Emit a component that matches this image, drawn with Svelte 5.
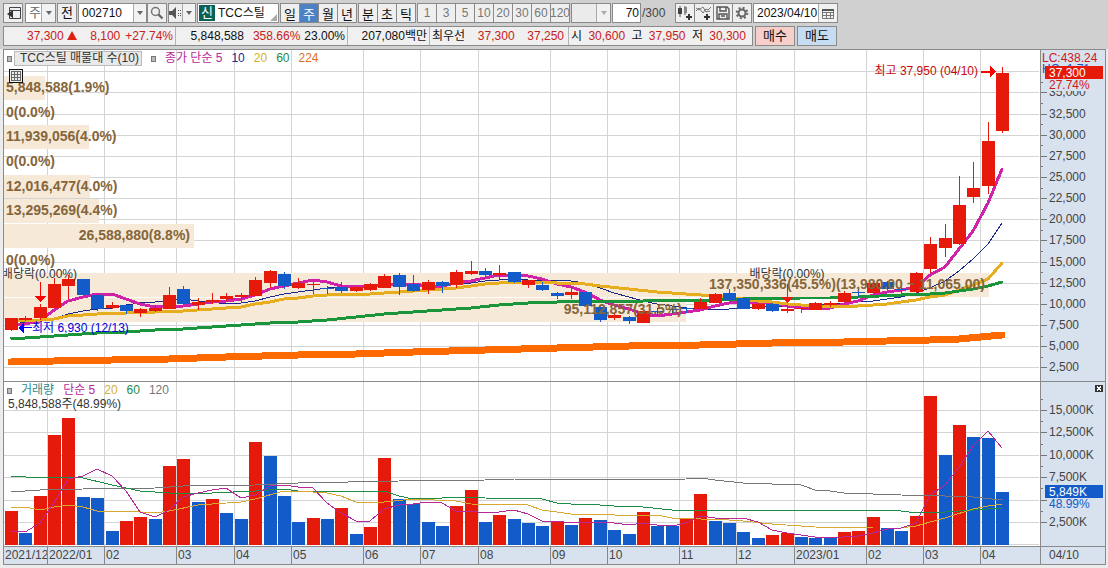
<script lang="ts">
  let period = $state('주');
  let unit = $state('주');
  let code = $state('002710');
  let stock = $state('TCC스틸');
  let count = $state('70');
  let date = $state('2023/04/10');
  let width = $state(1036);

  const periods = ['일', '주', '월', '년'];
  const smallPeriods = ['분', '초', '틱'];
  const minutes = ['1', '3', '5', '10', '20', '30', '60', '120'];

  const RED = '#e61a0a';
  const BLUE = '#125bc8';

  // color, body top, body bottom, high, low
  const candles: [string, number, number, number, number][] = [
    ['r', 268, 280, 268, 281], ['r', 268, 270, 266, 271], ['r', 257, 268, 254, 270], ['r', 234, 258, 228, 258],
    ['r', 229, 236, 225, 249], ['b', 229, 245, 229, 245], ['b', 245, 259, 243, 261], ['r', 255, 258, 252, 259],
    ['b', 255, 261, 255, 264], ['r', 259, 263, 258, 267], ['r', 258, 261, 255, 262], ['r', 245, 259, 237, 259],
    ['b', 239, 254, 236, 254], ['r', 252, 255, 248, 260], ['r', 250, 252, 243, 254], ['r', 246, 249, 243, 251],
    ['r', 245, 247, 243, 253], ['r', 230, 246, 227, 246], ['r', 221, 233, 220, 238], ['b', 224, 236, 222, 239],
    ['r', 233, 238, 228, 239], ['r', 234, 235, 231, 244], ['b', 238, 239, 236, 244], ['b', 237, 241, 232, 243],
    ['r', 237, 241, 237, 242], ['r', 234, 240, 233, 241], ['r', 226, 238, 224, 238], ['b', 225, 237, 223, 245],
    ['b', 234, 241, 225, 242], ['r', 232, 240, 230, 244], ['b', 232, 236, 231, 243], ['r', 222, 235, 220, 238],
    ['r', 221, 224, 211, 225], ['b', 221, 225, 218, 226], ['r', 223, 225, 215, 229], ['b', 222, 232, 222, 233],
    ['r', 230, 235, 230, 238], ['b', 235, 240, 232, 241], ['b', 243, 246, 242, 249], ['r', 242, 245, 237, 249],
    ['b', 242, 256, 242, 257], ['b', 257, 270, 256, 272], ['r', 265, 268, 263, 270], ['b', 267, 271, 266, 274],
    ['r', 261, 273, 261, 273], ['b', 261, 262, 258, 265], ['b', 259, 260, 256, 263], ['b', 258, 259, 257, 263],
    ['r', 252, 259, 248, 259], ['r', 244, 253, 243, 253], ['b', 243, 250, 239, 250], ['b', 248, 259, 248, 259],
    ['r', 254, 259, 253, 260], ['b', 254, 261, 253, 262], ['r', 259, 261, 255, 263], ['r', 258, 259, 257, 263],
    ['r', 253, 260, 252, 260], ['r', 253, 255, 251, 257], ['r', 243, 252, 241, 252], ['b', 242, 243, 239, 247],
    ['r', 233, 243, 232, 244], ['b', 232, 239, 231, 240], ['b', 239, 240, 236, 243], ['r', 223, 242, 222, 243],
    ['r', 194, 219, 187, 223], ['r', 188, 198, 174, 207], ['r', 155, 194, 126, 195], ['r', 138, 147, 112, 153],
    ['r', 91, 136, 72, 144], ['r', 23, 81, 17, 83]
  ];

  const volumes = [
    34, 12, 49, 110, 127, 48, 47, 14, 24, 28, 26, 79, 86, 43, 46, 32, 26, 103, 89, 49, 23, 27, 26, 37, 11,
    18, 87, 46, 41, 23, 19, 39, 55, 23, 30, 26, 22, 19, 24, 20, 27, 25, 15, 11, 33, 19, 19, 27, 51, 24,
    22, 13, 7, 10, 12, 8, 7, 7, 13, 14, 28, 17, 14, 29, 149, 90, 120, 108, 107, 53
  ];
  const volumeUp = [0, 2, 3, 4, 8, 9, 11, 12, 14, 17, 21, 23, 25, 26, 31, 32, 34, 38, 40, 44, 47, 48, 53, 54, 58, 59, 60, 63, 64, 66];

  // moving averages: candle index, y
  type Points = [number, number][];
  const seq = (ys: number[]): Points => ys.map((y, i) => [i, y]);

  const ma5 = seq([
    276, 274, 271, 260, 251, 247, 244, 244, 249, 254, 257, 256, 256, 254, 252, 251, 249, 245, 239, 236, 233, 230, 232, 236,
    237, 236, 235, 234, 234, 236, 236, 233, 231, 228, 225, 225, 226, 229, 234, 237, 242, 250, 255, 259, 264, 266, 264, 262,
    260, 256, 253, 252, 252, 253, 256, 258, 258, 258, 254, 251, 245, 242, 240, 237, 225, 217, 199, 181, 153, 119
  ]);
  const ma10 = seq([
    275, 272, 271, 269, 264, 261, 259, 258, 255, 253, 252, 251, 249, 251, 252, 254, 253, 251, 247, 244, 242, 240, 238, 237,
    237, 235, 234, 235, 236, 236, 235, 234, 233, 231, 230, 229, 230, 230, 230, 231, 233, 238, 243, 247, 251, 254, 256, 258,
    259, 259, 259, 258, 257, 256, 256, 257, 256, 254, 253, 252, 251, 249, 247, 243, 238, 231, 221, 209, 194, 173
  ]);
  const ma20: Points = [
    [0, 271], [2, 270], [3, 269], [4, 266], [5, 265], [6, 264], [8, 263], [10, 262], [12, 261], [14, 259], [15, 258], [16, 257],
    [17, 254], [18, 252], [19, 249], [20, 248], [21, 246], [22, 245], [23, 244], [24, 245], [25, 244], [27, 242], [29, 240],
    [31, 238], [32, 236], [33, 234], [34, 233], [36, 232], [38, 233], [40, 234], [41, 236], [43, 239], [45, 242], [47, 244],
    [49, 246], [50, 247], [51, 249], [52, 251], [53, 252], [54, 254], [55, 255], [56, 256], [59, 256], [60, 255], [61, 254],
    [62, 252], [63, 250], [64, 247], [65, 245], [66, 240], [67, 235], [68, 229], [69, 213]
  ];
  const ma60: Points = [
    [0, 288], [1, 288], [2, 287], [4, 285], [6, 283], [8, 282], [10, 280], [12, 279], [14, 277], [16, 275], [18, 273], [20, 272],
    [22, 270], [24, 267], [26, 264], [28, 262], [30, 260], [32, 258], [34, 255], [36, 253], [38, 252], [40, 251], [44, 251],
    [49, 250], [51, 249], [55, 248], [57, 248], [59, 247], [62, 245], [64, 244], [65, 243], [66, 241], [67, 239], [68, 236], [69, 232]
  ];
  const ma224: Points = [
    [0, 312], [3, 311], [7, 310], [11, 309], [15, 307], [20, 305], [24, 304], [28, 302], [33, 300], [38, 298], [43, 296],
    [48, 295], [53, 293], [58, 292], [61, 291], [64, 290], [66, 289], [69, 285]
  ];

  const vol5: Points = [
    [0, 149], [1, 150], [2, 141], [3, 121], [4, 97], [5, 94], [6, 87], [7, 94], [8, 109], [9, 130], [10, 135], [11, 128], [12, 115],
    [13, 111], [14, 108], [15, 106], [16, 116], [17, 113], [18, 104], [19, 103], [20, 105], [21, 106], [22, 121], [23, 131],
    [24, 139], [25, 139], [26, 127], [27, 123], [28, 122], [29, 120], [30, 121], [31, 129], [32, 129], [33, 131], [34, 130],
    [35, 128], [36, 132], [37, 139], [38, 139], [39, 141], [41, 140], [42, 141], [43, 143], [44, 141], [45, 143], [46, 144],
    [47, 141], [48, 134], [49, 136], [51, 136], [52, 140], [53, 148], [54, 151], [55, 153], [56, 155], [58, 155], [59, 154],
    [60, 151], [61, 147], [62, 146], [63, 141], [64, 113], [65, 103], [66, 85], [67, 64], [68, 49], [69, 66]
  ];
  const vol20: Points = [
    [0, 125], [1, 125], [2, 128], [3, 125], [4, 123], [5, 125], [6, 129], [7, 130], [8, 129], [10, 131], [11, 129], [13, 123],
    [16, 120], [17, 117], [19, 109], [21, 110], [22, 111], [23, 114], [24, 120], [25, 121], [26, 120], [28, 117], [31, 119],
    [32, 122], [36, 123], [37, 128], [39, 132], [41, 132], [43, 134], [45, 133], [46, 136], [50, 138], [51, 139], [53, 142],
    [56, 145], [60, 146], [62, 146], [63, 144], [64, 140], [65, 136], [67, 127], [68, 124], [69, 122]
  ];
  const vol60: Points = [
    [0, 94], [2, 96], [4, 95], [5, 96], [7, 103], [9, 109], [11, 111], [14, 111], [17, 109], [19, 107], [20, 109], [25, 110],
    [26, 109], [27, 114], [28, 117], [32, 115], [33, 116], [37, 117], [38, 121], [39, 122], [41, 123], [42, 124], [44, 125],
    [46, 128], [50, 128], [62, 129], [63, 131], [65, 130], [66, 129], [69, 126]
  ];
  const vol120: Points = [
    [0, 110], [2, 108], [5, 107], [10, 106], [12, 104], [17, 103], [20, 101], [27, 99], [33, 98], [35, 97], [41, 98], [47, 97],
    [48, 96], [49, 98], [51, 101], [53, 102], [55, 103], [56, 108], [57, 109], [58, 111], [60, 112], [62, 113], [65, 114],
    [67, 115], [69, 118]
  ];

  // volume profile bands, size is the share of the plot width
  const bands = [
    { y: 26, h: 24, size: 0.04, text: '5,848,588(1.9%)' },
    { y: 51, h: 24, size: 0, text: '0(0.0%)' },
    { y: 75, h: 24, size: 0.082, text: '11,939,056(4.0%)' },
    { y: 100, h: 24, size: 0, text: '0(0.0%)' },
    { y: 125, h: 23, size: 0.083, text: '12,016,477(4.0%)' },
    { y: 149, h: 24, size: 0.092, text: '13,295,269(4.4%)' },
    { y: 174, h: 24, size: 0.183, text: '26,588,880(8.8%)' },
    { y: 199, h: 24, size: 0, text: '0(0.0%)' },
    { y: 223, h: 24, size: 0.951, text: '137,350,336(45.5%)(13,980.00 ~ 11,065.00)' },
    { y: 248, h: 24, size: 0.658, text: '95,112,857(31.5%)' }
  ];

  const months: [number, string][] = [
    [2.5, '2022/01'], [6.5, '02'], [11.5, '03'], [15.5, '04'], [19.5, '05'], [24.5, '06'], [28.5, '07'], [32.5, '08'],
    [37.5, '09'], [41.5, '10'], [46.5, '11'], [50.5, '12'], [54.5, '2023/01'], [59.5, '02'], [63.5, '03'], [67.5, '04']
  ];

  const prices = Array.from({ length: 15 }, (_, i) => (i + 1) * 2500);
  const volumeTicks = [2500, 5000, 7500, 10000, 12500, 15000];

  const priceY = (p: number) => Math.round(338.5 - p * 0.00846);
  const volumeY = (v: number) => Math.round(162.4 - v * 0.00896);

  const step = $derived((width - 45) / 69);
  const x = $derived((i: number) => Math.round(7 + i * step));
  const path = $derived((pts: Points) => pts.map(([i, y]) => `${x(i)},${y}`).join(' '));
</script>

<div class="app">
  <header>
    <div class="bar tight">
      <button class="btn icon panel" aria-label="패널 열기">
        <svg width="15" height="14" viewBox="0 0 15 14"><path d="M3.5 1.5h11v11h-11zM3.5 4.5h11M6.5 4.5v8" fill="none" stroke="#444" /><path d="M7 4v8L1 8z" fill="#333" /></svg>
      </button>
      <div class="combo unit">
        <select aria-label="주기" bind:value={unit}>
          <option>주</option>
          <option>월</option>
        </select>
        <span class="drop"></span>
      </div>
      <button class="btn prev">전</button>
      <div class="combo code">
        <input aria-label="종목코드" bind:value={code} />
        <button class="drop" aria-label="종목 목록"></button>
      </div>
      <button class="btn icon search" aria-label="검색">
        <svg width="14" height="14" viewBox="0 0 14 14"><circle cx="5.5" cy="5.5" r="4" fill="none" stroke="#777" stroke-width="1.5" /><path d="M8.500 8.500l4 4" stroke="#666" stroke-width="2.400" /></svg>
      </button>
      <div class="combo sound">
        <button aria-label="음성">
          <svg width="13" height="12" viewBox="0 0 13 12"><path d="M0 4h3l4-4v12l-4-4H0z" fill="#555" /><path d="M9 3h1v1H9zM9 6h1v1H9zM9 8h1v1H9zM11 3h1v1h-1zM11 6h1v1h-1zM11 8h1v1h-1z" fill="#555" /></svg>
        </button>
        <button class="drop" aria-label="음성 설정"></button>
      </div>
      <div class="combo stock">
        <span class="badge">신</span>
        <input aria-label="종목명" bind:value={stock} />
        <i></i>
      </div>
      <div class="group days">
        {#each periods as p}
          <button class:on={period === p} onclick={() => (period = p)}>{p}</button>
        {/each}
      </div>
      <div class="group short">
        {#each smallPeriods as p}
          <button class:on={period === p} onclick={() => (period = p)}>{p}</button>
        {/each}
      </div>
      <div class="group nums">
        {#each minutes as m}
          <button>{m}</button>
        {/each}
      </div>
      <div class="combo etc">
        <select aria-label="사용자 주기"><option></option></select>
        <span class="drop off"></span>
      </div>
      <div class="combo count">
        <input aria-label="표시 개수" bind:value={count} />
      </div>
      <span class="total">/300</span>
      <div class="group tools">
        <button aria-label="차트 추가">
          <svg width="16" height="14" viewBox="0 0 16 14"><path d="M3 0v11M8 0v9" stroke="#555" /><path d="M1 2h4v6H1z" fill="#444" /><path d="M7 1h3v6H7z" fill="#888" /><path d="M12 8v6M9 11h6" stroke="#333" stroke-width="2" /></svg>
        </button>
        <button aria-label="지표 추가">
          <svg width="16" height="14" viewBox="0 0 16 14"><path d="M0 5l3-3 4 5 3-4 2 1 3-3M0 2l3 2 4-3 3 5 4-1" fill="none" stroke="#777" /><path d="M11 8v6M8 11h6" stroke="#333" stroke-width="2" /></svg>
        </button>
        <button aria-label="저장">
          <svg width="14" height="14" viewBox="0 0 14 14"><path d="M1 1h10l2 2v10H1zM4 1v4h6V1M3 13V8h8v5M5 10h4" fill="none" stroke="#555" stroke-width="1.400" /></svg>
        </button>
        <button aria-label="설정">
          <svg width="14" height="14" viewBox="0 0 14 14"><circle cx="7" cy="7" r="3.500" fill="none" stroke="#666" stroke-width="2" /><circle cx="7" cy="7" r="5.300" fill="none" stroke="#666" stroke-width="2" stroke-dasharray="2 2.160" /></svg>
        </button>
      </div>
      <div class="combo date">
        <input aria-label="날짜" bind:value={date} />
        <button class="cal" aria-label="달력">
          <svg width="12" height="11" viewBox="0 0 12 11"><path d="M.5 1.500h11v9H.5zM.5 4.500h11M4.500 4v6M8.500 4v6M.5 7.500h11" fill="none" stroke="#777" /><path d="M0 1h12v2H0z" fill="#555" /></svg>
        </button>
      </div>
    </div>

    <div class="bar">
      <div class="quote">
        <div class="cell price up"><span>37,300</span><b class="tri"></b><span class="diff">8,100</span><span class="rate">+27.74%</span></div>
        <div class="cell vol"><span>5,848,588</span><span class="up">358.66%</span><span>23.00%</span></div>
        <div class="cell amount"><span>207,080백만</span></div>
        <div class="cell best"><span>최우선</span><span class="up">37,300</span><span class="up">37,250</span></div>
        <div class="cell ohl">
          <span>시</span><span class="up">30,600</span><span>고</span><span class="up">37,950</span><span>저</span><span class="up">30,300</span>
        </div>
      </div>
      <button class="btn buy">매수</button>
      <button class="btn sell">매도</button>
    </div>
  </header>

  <main>
    <section class="plot price-plot" bind:clientWidth={width}>
      <svg {width} height="331">
        {#each prices as p}
          <rect class="grid" x="0" y={priceY(p)} width={width - 1} height="1" />
        {/each}
        {#each months as [i]}
          <rect class="grid" x={x(i)} y="0" width="1" height="331" />
        {/each}

        {#each bands as b}
          <rect x="0" y={b.y} width={Math.round(b.size * width)} height={b.h} fill="#f6e9d7" />
        {/each}

        <polyline points={path(ma10)} stroke="#1a2a8c" stroke-width="1" />
        <polyline points={path(ma5)} stroke="#cf22a8" stroke-width="3" />
        <polyline points={path(ma20)} stroke="#e6ae1e" stroke-width="3" />
        <polyline points={path(ma60)} stroke="#1a953c" stroke-width="3" />
        <polyline points={path(ma224)} stroke="#ff6a00" stroke-width="7" />

        {#each candles as [c, top, bottom, high, low], i}
          <rect x={x(i)} y={high} width="1" height={low - high} fill={c === 'r' ? RED : BLUE} />
          <rect x={x(i) - 6} y={top} width="13" height={bottom - top} fill={c === 'r' ? RED : BLUE} />
        {/each}

        {#each bands as b}
          {#if b.size > 0.15}
            <text class="band" x={Math.round(b.size * width) - 4} y={b.y + 16} text-anchor="end">{b.text}</text>
          {:else}
            <text class="band" x="2" y={b.y + 16}>{b.text}</text>
          {/if}
        {/each}

        <text x={x(2) + 37} y="228" text-anchor="end" fill="#333">배당락(0.00%)</text>
        <path d="M{x(2)} 232h1v14h5l-5.500 6-5.500-6h5z" fill="#f00" />
        <text x={x(54)} y="228" text-anchor="middle" fill="#333">배당락(0.00%)</text>
        <path d="M{x(54)} 234h1v13h5l-5.500 6-5.500-6h5z" fill="#e61a0a" />

        <path d="M{x(0) + 7} 278l6-6v5h8v1h-8v6z" fill="#00f" />
        <text x={x(0) + 21} y="282" fill="#0000d8">최저 6,930 (12/13)</text>
        <text x={x(69) - 24} y="25" text-anchor="end" fill="#c80808">최고 37,950 (04/10)</text>
        <path d="M{x(69) - 21} 21h9v-6l6 6.500-6 6v-5h-9z" fill="#f00" />
      </svg>
      <div class="legend">
        <i></i><span class="tag">TCC스틸 매물대 수(10)</span>
        <i class="second"></i>
        <span class="m5">종가 단순 5</span><span class="m10">10</span><span class="m20">20</span><span class="m60">60</span><span class="m224">224</span>
      </div>
      <button class="table-btn" aria-label="표 보기">
        <svg width="10" height="10" viewBox="0 0 10 10"><path d="M.5.5h9v9h-9zM.5 3.500h9M.5 6.500h9M3.500 0v10M6.500 0v10" fill="none" stroke="#666" /></svg>
      </button>
    </section>

    <aside class="axis">
      <svg width="64" height="331">
        {#each prices.slice(0, 14) as p}
          <rect x="0" y={priceY(p)} width="6" height="1" fill="#777" />
          <rect x="0" y={priceY(p + 1250)} width="2" height="1" fill="#777" />
          <text class="tick" x="8" y={priceY(p) + 4}>{p.toLocaleString('en-US')}</text>
        {/each}
        <text x="1" y="23" fill="#1a50c0">HC:-1.71</text>
        <text x="1" y="12" fill="#d01818">LC:438.24</text>
        <rect x="4" y="29" width="50" height="12" fill="#d8e2ef" />
        <text x="8" y="39" fill="#d01818">27.74%</text>
        <rect x="4" y="16" width="58" height="13" fill="#e61a0a" />
        <text x="8" y="27" fill="#fff">37,300</text>
      </svg>
    </aside>

    <section class="plot">
      <svg {width} height="164">
        {#each volumeTicks as v}
          <rect class="grid" x="0" y={volumeY(v)} width={width - 1} height="1" />
        {/each}
        <rect class="grid" x="0" y="162" width={width - 1} height="1" />
        {#each months as [i]}
          <rect class="grid" x={x(i)} y="0" width="1" height="164" />
        {/each}
        {#each volumes as v, i}
          <rect x={x(i) - 6} y={163 - v} width="13" height={v} fill={volumeUp.includes(i) ? RED : BLUE} />
        {/each}
        <polyline points={path(vol120)} stroke="#777" />
        <polyline points={path(vol60)} stroke="#1e8c46" />
        <polyline points={path(vol20)} stroke="#d8a830" />
        <polyline points={path(vol5)} stroke="#b8289a" />
      </svg>
      <div class="legend">
        <i></i><span class="amount-name">거래량</span><span class="m5">단순 5</span><span class="m20">20</span><span class="m60">60</span><span class="m120">120</span>
      </div>
      <div class="now">5,848,588주(48.99%)</div>
    </section>

    <aside class="axis">
      <svg width="64" height="164">
        {#each volumeTicks as v}
          <rect x="0" y={volumeY(v)} width="6" height="1" fill="#777" />
          <rect x="0" y={volumeY(v + 1250)} width="2" height="1" fill="#777" />
          {#if v !== 5000}
            <text class="tick" x="8" y={volumeY(v) + 4}>{v.toLocaleString('en-US')}K</text>
          {/if}
        {/each}
        <text x="8" y="126" fill="#125bc8">48.99%</text>
        <rect x="4" y="103" width="58" height="13" fill="#125bc8" />
        <text x="8" y="114" fill="#fff">5,849K</text>
      </svg>
      <button class="close" aria-label="닫기">
        <svg width="8" height="7" viewBox="0 0 8 7"><path d="M2 1.500l4 4M6 1.500l-4 4" stroke="#fff" /></svg>
      </button>
    </aside>

    <div class="dates">
      <svg {width} height="17">
        <text class="tick" x="1" y="12">2021/12</text>
        {#each months as [i, label]}
          <rect x={x(i)} y="0" width="1" height="17" fill="#888" />
          <text class="tick" x={x(i) + 2} y="12">{label}</text>
        {/each}
      </svg>
    </div>
    <div class="dates last">04/10</div>
  </main>
</div>

<style>
  :global(body) {
    background: #ececec;
  }

  .app {
    font-family: 'Liberation Sans', 'Noto Sans CJK KR', sans-serif;
    font-size: 12px;
    color: #111;
  }

  button,
  input,
  select {
    font: inherit;
    color: inherit;
    margin: 0;
    padding: 0;
    border: 0;
    background: none;
    border-radius: 0;
    outline: 0;
    min-width: 0;
    box-sizing: border-box;
  }

  select {
    appearance: none;
  }

  header {
    background: #d0d0d0;
    padding: 3px;
    display: flex;
    flex-direction: column;
    gap: 3px;
  }

  .bar {
    display: flex;
    height: 20px;
    gap: 2px;
    white-space: nowrap;
  }

  .tight {
    gap: 1px;
  }

  .btn,
  .combo,
  .group {
    box-sizing: border-box;
    height: 20px;
    border: 1px solid #8a8a8a;
    background: #efefef;
    flex: none;
  }

  .btn {
    width: 20px;
    font-size: 13px;
    line-height: 18px;
  }

  .panel {
    margin-right: 1px;
  }

  .icon,
  .group button,
  .sound button,
  .cal {
    display: flex;
    align-items: center;
    justify-content: center;
  }

  .combo {
    display: flex;
    background: #fff;
    line-height: 18px;
  }

  .combo input,
  .combo select {
    flex: 1;
    padding-left: 3px;
    height: 18px;
  }

  .drop {
    width: 13px;
    height: 18px;
    border-left: 1px solid #aaa;
    background: #f2f2f2;
    display: flex;
    align-items: center;
    justify-content: center;
    flex: none;
  }

  .drop::after {
    content: '';
    border: 3px solid transparent;
    border-top: 4px solid #666;
    border-bottom: 0;
  }

  .drop.off::after {
    border-top-color: #aaa;
  }

  .unit {
    width: 31px;
    color: #666;
    font-size: 13px;
  }

  .code {
    width: 69px;
  }

  .search {
    margin-left: -1px;
  }

  .sound {
    width: 28px;
    background: #efefef;
  }

  .sound button:first-child {
    flex: 1;
  }

  .stock {
    width: 82px;
    position: relative;
  }

  .badge {
    width: 16px;
    background: #0b6156;
    color: #fff;
    text-align: center;
    margin: 1px 0 1px 1px;
    line-height: 16px;
    font-size: 13px;
    flex: none;
  }

  .stock i {
    position: absolute;
    right: 1px;
    bottom: 1px;
    border-left: 7px solid transparent;
    border-bottom: 7px solid #aaa;
  }

  .group {
    display: flex;
  }

  .group button {
    flex: 1;
    height: 18px;
    border-right: 1px solid #8a8a8a;
    font-size: 13px;
  }

  .group button:last-child {
    border-right: 0;
  }

  .group button.on {
    background: #4c82c3;
    color: #fff;
  }

  .days,
  .tools {
    width: 77px;
  }

  .short {
    width: 58px;
  }

  .nums {
    width: 153px;
    color: #777;
  }

  .nums button {
    font-size: 12px;
  }

  .etc {
    width: 40px;
    background: #ebebeb;
  }

  .count {
    width: 29px;
  }

  .count input {
    width: 100%;
    text-align: right;
    padding-right: 1px;
  }

  .total {
    line-height: 20px;
    color: #444;
    width: 32px;
  }

  .date {
    width: 85px;
  }

  .cal {
    width: 19px;
    height: 18px;
    border-left: 1px solid #aaa;
    background: #f2f2f2;
  }

  .quote {
    display: flex;
    box-sizing: border-box;
    width: 750px;
    height: 20px;
    border: 1px solid #8a8a8a;
    background: #f0f0f0;
    line-height: 18px;
  }

  .cell {
    box-sizing: border-box;
    display: flex;
    align-items: baseline;
    justify-content: space-between;
    padding: 0 2px;
    border-right: 1px solid #b4b4b4;
  }

  .cell:last-child {
    border-right: 0;
  }

  .up {
    color: #c8201a;
  }

  .price {
    width: 172px;
    padding-left: 23px;
    justify-content: flex-start;
  }

  .tri {
    margin-left: 3px;
    border: 5px solid transparent;
    border-bottom: 9px solid #e02010;
    border-top: 0;
  }

  .diff {
    margin-left: auto;
  }

  .rate {
    margin-left: 5px;
  }

  .vol {
    width: 172px;
    justify-content: flex-end;
    gap: 4px;
  }

  .vol .up {
    margin-left: 5px;
  }

  .amount {
    width: 82px;
    justify-content: flex-end;
  }

  .best {
    width: 139px;
    padding-right: 4px;
  }

  .ohl {
    flex: 1;
    padding-right: 6px;
  }

  .buy,
  .sell {
    width: 40px;
  }

  .buy {
    background: #f6cfcb;
  }

  .sell {
    background: #c5dcf3;
  }

  main {
    display: grid;
    grid-template-columns: minmax(0, 1fr) 65px;
    margin: 0 2px 0 3px;
    border: 1px solid #8a8a8a;
    background: #fff;
  }

  svg {
    display: block;
    shape-rendering: crispEdges;
  }

  header svg {
    shape-rendering: auto;
    flex: none;
  }

  polyline {
    fill: none;
    stroke-linecap: round;
    stroke-linejoin: round;
  }

  .grid {
    fill: #d4d4d4;
  }

  .plot {
    position: relative;
    overflow: hidden;
  }

  .price-plot,
  .price-plot + .axis {
    border-bottom: 1px solid #8a8a8a;
  }

  .band {
    font-size: 14px;
    font-weight: bold;
    fill: #85653a;
  }

  .legend {
    position: absolute;
    top: 1px;
    left: 3px;
    display: flex;
    align-items: baseline;
    line-height: 15px;
    gap: 9px;
  }

  .legend i {
    width: 3px;
    height: 4px;
    border: 1px solid #777;
    background: #bbb;
    align-self: center;
  }

  .tag {
    border: 1px solid #bbb;
    background: #e9e9e9;
    color: #333;
    padding: 0 2px 0 5px;
    line-height: 13px;
    margin-left: -7px;
  }

  .m5 {
    color: #b8289a;
  }

  .m10 {
    color: #1a2a8c;
  }

  .m20 {
    color: #d8b02a;
  }

  .m60 {
    color: #1e8c46;
  }

  .m120 {
    color: #777;
  }

  .m224 {
    color: #e0701e;
  }

  .amount-name {
    color: #2f8a8a;
  }

  .now {
    position: absolute;
    top: 15px;
    left: 4px;
    line-height: 14px;
    color: #333;
  }

  .table-btn {
    position: absolute;
    left: 5px;
    top: 19px;
    width: 14px;
    height: 14px;
    border: 1px solid #111;
    background: #eee;
    padding: 1px;
  }

  .axis {
    position: relative;
    border-left: 1px solid #8a8a8a;
    background: #d8e2ef;
  }

  .tick {
    fill: #444;
  }

  .close {
    position: absolute;
    right: 2px;
    top: 3px;
    width: 8px;
    height: 7px;
    background: #333;
  }

  .dates {
    border-top: 1px solid #8a8a8a;
    background: #d8e2ef;
    color: #444;
    height: 17px;
  }

  .last {
    border-left: 1px solid #8a8a8a;
    padding-left: 8px;
    line-height: 16px;
  }
</style>
